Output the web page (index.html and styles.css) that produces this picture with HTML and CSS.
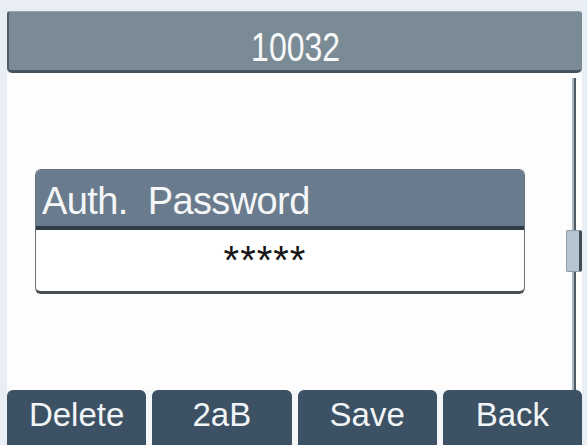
FILE: index.html
```html
<!DOCTYPE html>
<html>
	<head>
		<meta charset="utf-8">
		<link rel="stylesheet" href="styles.css">
		<title>10032 - Auth. Password</title>
	</head>
	<body>
		<div class="screen">
			<div class="title-bar"><span class="narrow">10032</span></div>
			<div class="main">
				<div class="content">
					<div class="dialog">
						<div class="dialog-title">Auth.  Password</div>
						<div class="dialog-field">*****</div>
					</div>
				</div>
				<div class="scrollbar">
					<div class="track track-top"></div>
					<div class="thumb"></div>
					<div class="track track-rest"></div>
				</div>
			</div>
			<div class="softkeys">
				<div class="softkey">Delete</div>
				<div class="softkey">2aB</div>
				<div class="softkey">Save</div>
				<div class="softkey">Back</div>
			</div>
		</div>
	</body>
</html>
```

FILE: styles.css
```css
html, body {
	margin: 0;
	height: 100%;
	background-color: #e8eef4;
	font-family: "Liberation Sans", Arial, sans-serif;
}
.screen {
	display: flex;
	flex-direction: column;
	height: 445px;
	padding: 11px 5px 0 7px;
	box-sizing: border-box;
	overflow: hidden;
}
.title-bar {
	height: 62px;
	box-sizing: border-box;
	padding-top: 10px;
	line-height: 50px;
	font-size: 40px;
	text-align: center;
	color: #f7f9fa;
	background-color: #7b8b96;
	border-top: 1px solid #93a1ab;
	border-left: 2px solid #505b64;
	border-bottom: 3px solid #46525c;
	border-radius: 3px 3px 5px 5px;
}
.narrow {
	display: inline-block;
	transform: scaleX(0.8);
}
.main {
	flex: 1;
	display: flex;
	background-color: #fdfdfd;
}
.content {
	flex: 1;
	display: flex;
	align-items: center;
	padding-left: 28px;
}
.dialog {
	width: 488px;
	border: 1px solid #6a737b;
	border-bottom: 3px solid #4a4f54;
	border-radius: 6px;
	overflow: hidden;
	background-color: #ffffff;
}
.dialog-title {
	height: 60px;
	box-sizing: border-box;
	padding: 3px 0 0 6px;
	line-height: 57px;
	font-size: 38px;
	letter-spacing: -0.6px;
	white-space: pre;
	color: #f4f6f8;
	background-color: #6a7b8d;
	border-bottom: 4px solid #2f3b45;
}
.dialog-field {
	height: 61px;
	line-height: 61px;
	padding-right: 30px;
	font-size: 40px;
	letter-spacing: 1px;
	text-align: center;
	color: #151515;
}
.scrollbar {
	width: 17px;
	display: flex;
	flex-direction: column;
	align-items: center;
	padding-top: 5px;
}
.track {
	width: 0;
	border-left: 2px solid #a9b7c2;
	border-right: 2px solid #4e5961;
}
.track-top {
	height: 152px;
}
.track-rest {
	flex: 1;
}
.thumb {
	width: 12px;
	height: 40px;
	background-color: #b6c5d1;
	border: 1px solid #8e9ba6;
	border-right: 3px solid #3f4a52;
	border-radius: 2px;
}
.softkeys {
	display: flex;
	gap: 6px;
	height: 55px;
	background-color: #f4f6f8;
}
.softkey {
	flex: 1;
	height: 55px;
	line-height: 50px;
	font-size: 33px;
	text-align: center;
	color: #f2f5f7;
	background-color: #3d5164;
	border-radius: 6px 6px 0 0;
}
```
